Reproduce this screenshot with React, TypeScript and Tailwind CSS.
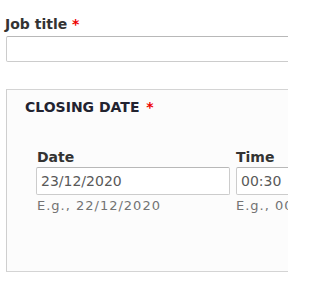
import React from "react";

export default function App() {
  return (
    <div className="w-[288px] h-[288px] overflow-hidden bg-white font-['DejaVu_Sans',sans-serif]">
      <div className="pt-[14px] pl-[5px] text-[14px] font-bold leading-[20px] text-[#333] whitespace-nowrap">
        Job title <span className="text-[#e00]">*</span>
      </div>
      <div className="ml-[6px] mt-[2px] h-[26px] w-[300px] rounded-[2px] border border-[#ccc] border-t-[#b8b8b8]" />
      <div className="ml-[6px] mt-[27px] h-[183px] w-[300px] border border-[#d4d4d4] border-l-[#cfcfcf] bg-[#fcfcfc]">
        <div className="pt-[7px] pl-[18px] text-[14px] font-bold uppercase leading-[21px] text-[#222330] whitespace-nowrap">
          Closing date <span className="ml-[2px] text-[#e00]">*</span>
        </div>
        <div className="mt-[30px] pl-[29px] flex gap-[6px]">
          <div className="flex flex-col w-[194px] shrink-0">
            <div className="pl-[1px] text-[14px] font-bold leading-[19px] text-[#333]">Date</div>
            <div className="h-[28px] rounded-[2px] border border-[#ccc] border-t-[#b8b8b8] bg-white pl-[4px] text-[14px] leading-[26px] text-[#595959]">
              23/12/2020
            </div>
            <div className="mt-[2px] pl-[1px] text-[13px] tracking-[1px] leading-[18px] text-[#737373] whitespace-nowrap">E.g., 22/12/2020</div>
          </div>
          <div className="flex flex-col w-[120px] shrink-0">
            <div className="text-[14px] font-bold leading-[19px] text-[#333]">Time</div>
            <div className="h-[28px] rounded-[2px] border border-[#ccc] border-t-[#b8b8b8] bg-white pl-[4px] text-[14px] leading-[26px] text-[#595959]">
              00:30
            </div>
            <div className="mt-[2px] text-[13px] tracking-[1px] leading-[18px] text-[#737373] whitespace-nowrap">E.g., 00:30</div>
          </div>
        </div>
      </div>
    </div>
  );
}
